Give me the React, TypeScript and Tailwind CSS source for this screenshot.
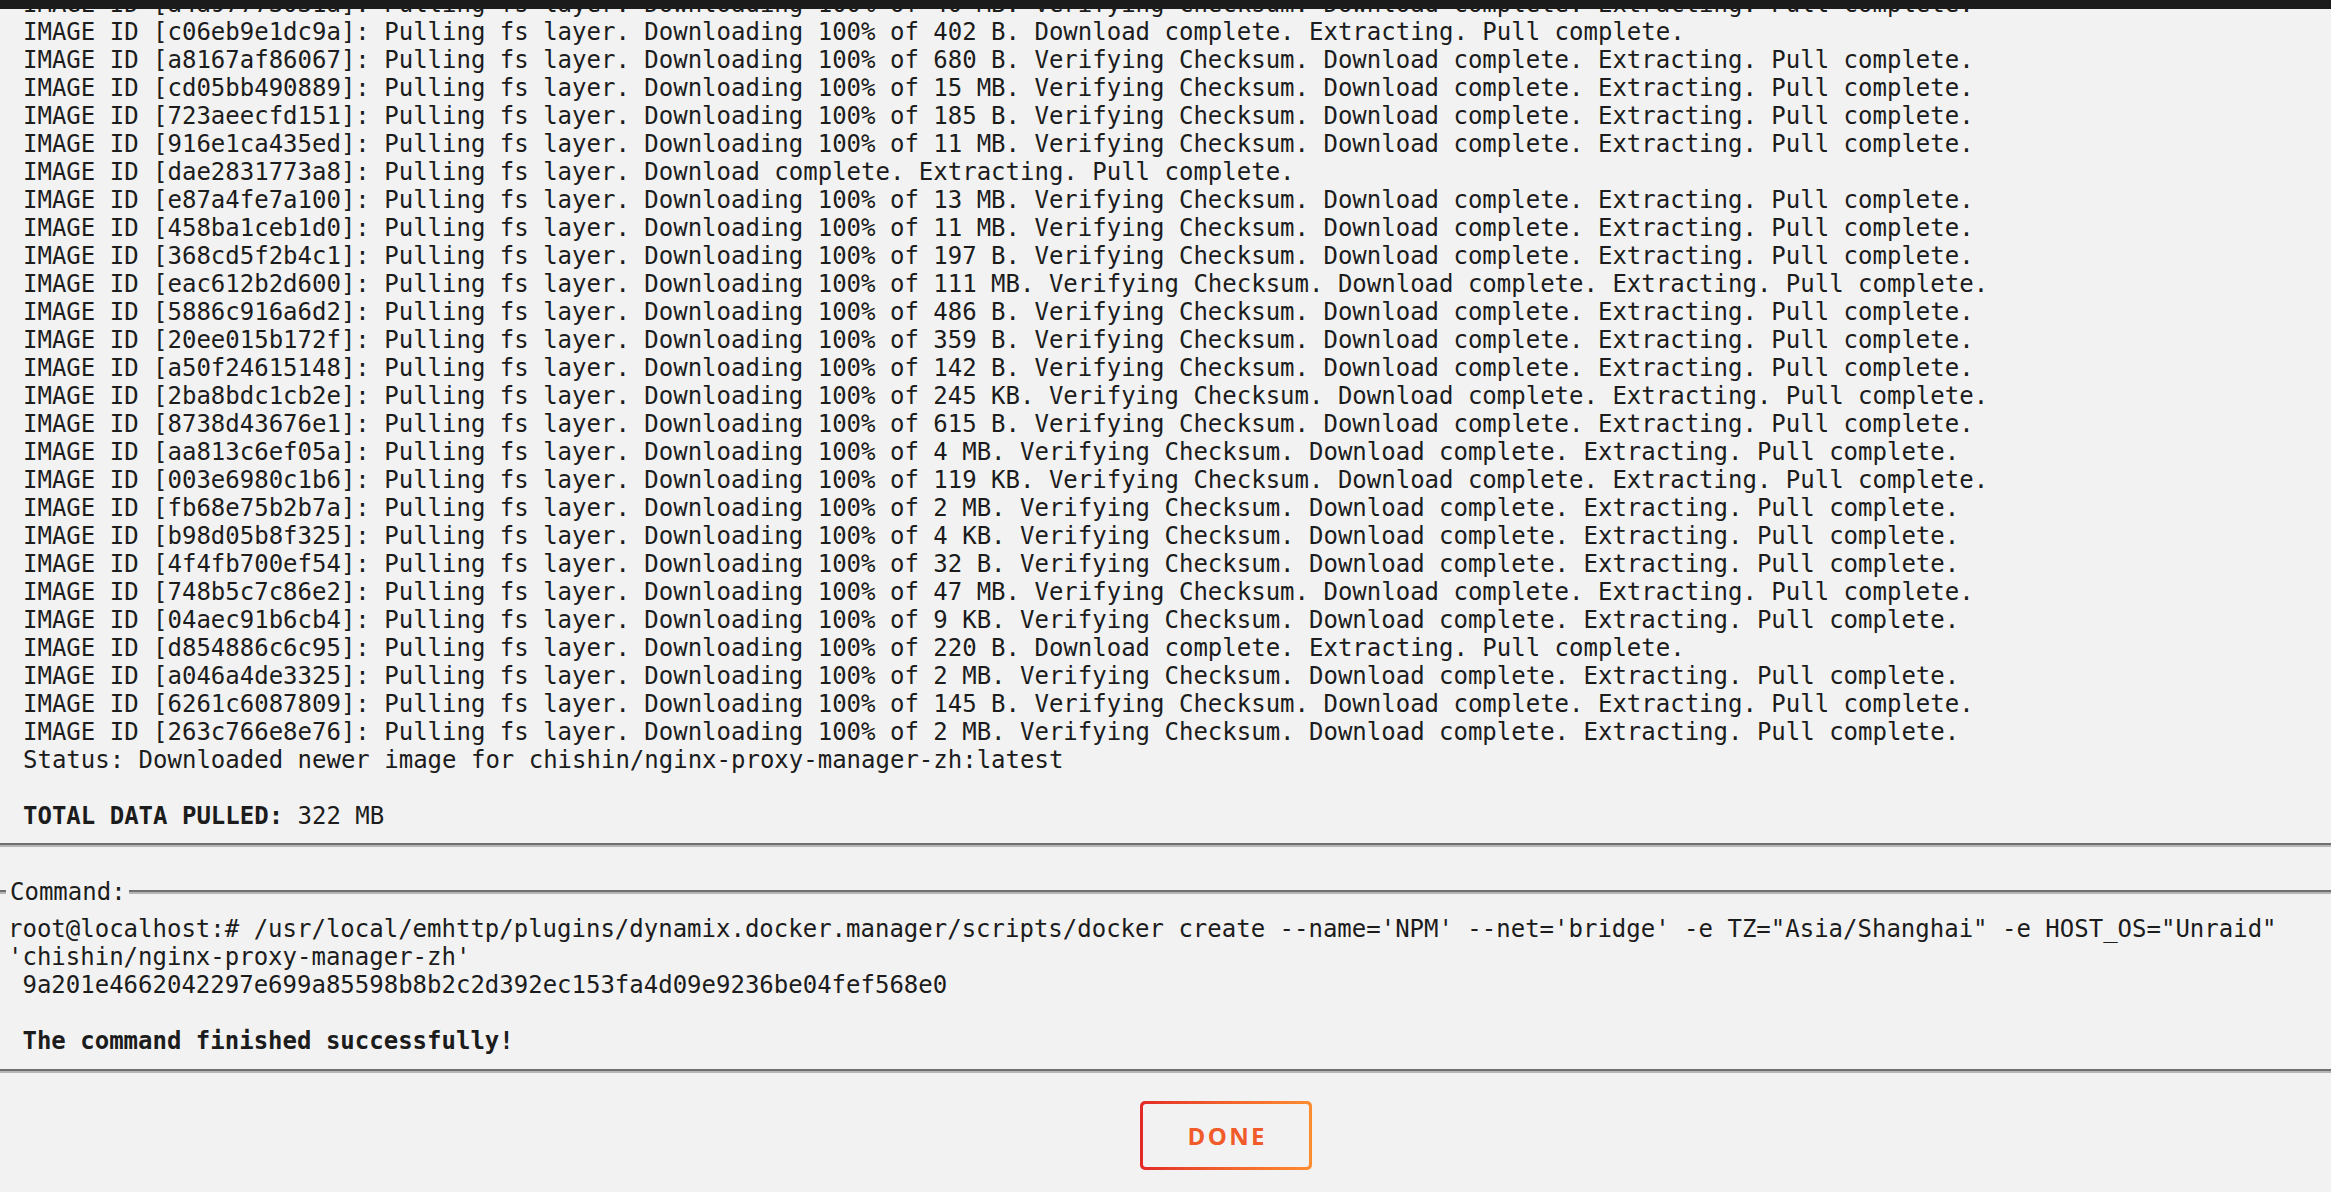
import type { FC } from 'react';

type Layer = { id: string; size?: string; verify?: boolean };

// docker pull progress, one row per fs layer
const layers: Layer[] = [
    { id: 'a4a97773031a', size: '40 MB', verify: true },
    { id: 'c06eb9e1dc9a', size: '402 B' },
    { id: 'a8167af86067', size: '680 B', verify: true },
    { id: 'cd05bb490889', size: '15 MB', verify: true },
    { id: '723aeecfd151', size: '185 B', verify: true },
    { id: '916e1ca435ed', size: '11 MB', verify: true },
    { id: 'dae2831773a8' },
    { id: 'e87a4fe7a100', size: '13 MB', verify: true },
    { id: '458ba1ceb1d0', size: '11 MB', verify: true },
    { id: '368cd5f2b4c1', size: '197 B', verify: true },
    { id: 'eac612b2d600', size: '111 MB', verify: true },
    { id: '5886c916a6d2', size: '486 B', verify: true },
    { id: '20ee015b172f', size: '359 B', verify: true },
    { id: 'a50f24615148', size: '142 B', verify: true },
    { id: '2ba8bdc1cb2e', size: '245 KB', verify: true },
    { id: '8738d43676e1', size: '615 B', verify: true },
    { id: 'aa813c6ef05a', size: '4 MB', verify: true },
    { id: '003e6980c1b6', size: '119 KB', verify: true },
    { id: 'fb68e75b2b7a', size: '2 MB', verify: true },
    { id: 'b98d05b8f325', size: '4 KB', verify: true },
    { id: '4f4fb700ef54', size: '32 B', verify: true },
    { id: '748b5c7c86e2', size: '47 MB', verify: true },
    { id: '04aec91b6cb4', size: '9 KB', verify: true },
    { id: 'd854886c6c95', size: '220 B' },
    { id: 'a046a4de3325', size: '2 MB', verify: true },
    { id: '6261c6087809', size: '145 B', verify: true },
    { id: '263c766e8e76', size: '2 MB', verify: true },
];

const layerText = (l: Layer) => {
    let s = `IMAGE ID [${l.id}]: Pulling fs layer. `;
    if (l.size) s += `Downloading 100% of ${l.size}. `;
    if (l.verify) s += 'Verifying Checksum. ';
    return s + 'Download complete. Extracting. Pull complete.';
};

const command =
    `root@localhost:# /usr/local/emhttp/plugins/dynamix.docker.manager/scripts/docker create --name='NPM' --net='bridge' -e TZ="Asia/Shanghai" -e HOST_OS="Unraid" 'chishin/nginx-proxy-manager-zh'\n 9a201e4662042297e699a85598b8b2c2d392ec153fa4d09e9236be04fef568e0\n\n`;

const Rule: FC = () => <div className="h-0 border-t-2 border-b-2 border-t-[#6f6f6f] border-b-[#b5b5b5]" />;

const App: FC = () => {
    return <div className="h-[1192px] w-full bg-[#f2f2f2] text-[#1c1c1c] flex flex-col overflow-hidden font-['DejaVu_Sans_Mono','Liberation_Mono',monospace] text-[24px] leading-[28px]">
        {/* title bar of the dialog */}
        <div className="h-[9px] shrink-0 bg-[#1c1b1b]" />

        {/* pull log, scrolled to the bottom */}
        <div className="h-[834px] shrink-0 overflow-hidden flex flex-col justify-end pl-[23px] pb-[13px] whitespace-pre">
            {layers.map((l) => <div key={l.id}>{layerText(l)}</div>)}
            <div>Status: Downloaded newer image for chishin/nginx-proxy-manager-zh:latest</div>
            <div>&nbsp;</div>
            <div><b>TOTAL DATA PULLED:</b> 322 MB</div>
        </div>

        <Rule />

        {/* command section */}
        <div className="pt-[31px] pb-[14px]">
            <div className="flex items-center">
                <div className="w-[6px] h-0 border-t-2 border-b-2 border-t-[#6f6f6f] border-b-[#b5b5b5]" />
                <span className="pl-[4px] pr-[3px]">Command:</span>
                <div className="flex-1 h-0 border-t-2 border-b-2 border-t-[#6f6f6f] border-b-[#b5b5b5]" />
            </div>
            <div className="pl-[8px] pt-[9px] whitespace-pre-wrap">
                {command}
                <b> The command finished successfully!</b>
            </div>
        </div>

        <Rule />

        <div className="flex justify-center pl-[121px] pt-[28px]">
            <button className="w-[172px] h-[69px] rounded-[5px] p-[3px] bg-gradient-to-r from-[#e22828] to-[#ff8c2f]">
                <span className="flex h-full w-full items-center justify-center rounded-[3px] bg-[#f2f2f2] font-['Open_Sans',sans-serif] font-bold text-[24px] tracking-[0.1em] text-[#f15a29] pl-[0.1em]">
                    DONE
                </span>
            </button>
        </div>
    </div>;
};

export default App;
